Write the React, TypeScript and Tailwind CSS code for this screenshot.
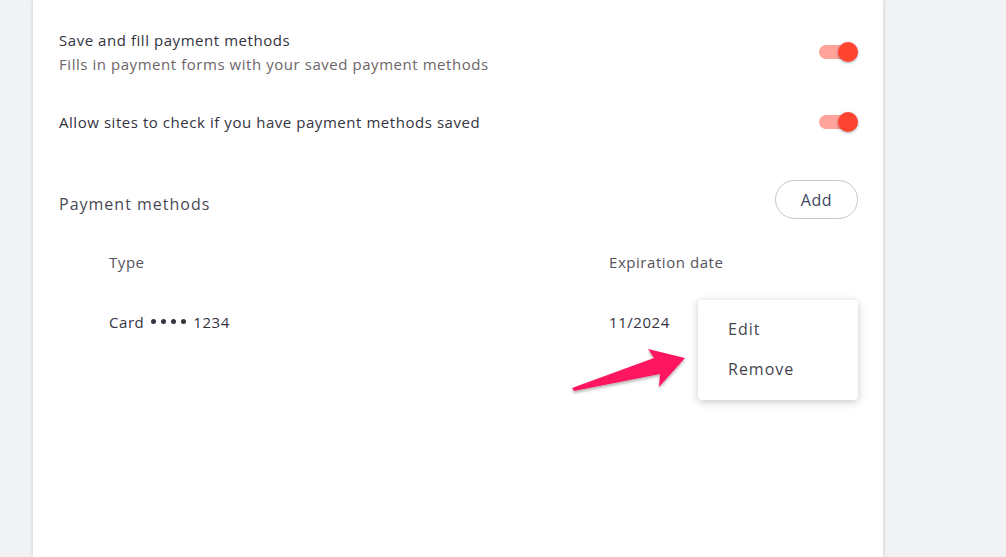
import React from "react";

function Toggle() {
  return (
    <div className="relative w-[40px] h-[20px] shrink-0">
      <div className="absolute left-[1px] top-[3px] w-[36px] h-[14px] rounded-full bg-[#ffa39b]" />
      <div className="absolute right-0 top-0 w-[20px] h-[20px] rounded-full bg-[#ff4331] shadow-[0_1px_3px_rgba(0,0,0,0.35)]" />
    </div>
  );
}

function Dots() {
  return (
    <span className="inline-flex items-center gap-[5px] mx-[7px] align-middle -mt-[2px]">
      <span className="w-[5px] h-[5px] rounded-full bg-[#35343f]" />
      <span className="w-[5px] h-[5px] rounded-full bg-[#35343f]" />
      <span className="w-[5px] h-[5px] rounded-full bg-[#35343f]" />
      <span className="w-[5px] h-[5px] rounded-full bg-[#35343f]" />
    </span>
  );
}

export default function App() {
  const body = { fontFamily: "'Open Sans', Lato, sans-serif" };

  return (
    <div className="relative min-h-screen bg-[#f1f2f4] overflow-hidden tracking-[0.55px]" style={body}>
      <div className="ml-[33px] w-[850px] min-h-[557px] bg-white shadow-[0_0_4px_rgba(0,0,0,0.18)] pt-[28px] pl-[26px] pr-[25px]">
        {/* Save and fill */}
        <div className="flex items-center justify-between">
          <div className="text-[15px] leading-6">
            <div className="text-[#33333d]">Save and fill payment methods</div>
            <div className="text-[#6e6568]">Fills in payment forms with your saved payment methods</div>
          </div>
          <Toggle />
        </div>

        {/* Allow sites */}
        <div className="mt-[34px] flex items-center justify-between h-6">
          <div className="text-[15px] leading-6 text-[#33333d]">
            Allow sites to check if you have payment methods saved
          </div>
          <Toggle />
        </div>

        {/* Payment methods header */}
        <div className="mt-[46px] flex items-start justify-between">
          <div className="mt-[12px] text-[16px] leading-6 font-medium tracking-[1px] text-[#4a4953]">
            Payment methods
          </div>
          <button className="w-[83px] h-[39px] rounded-full border border-[#c6c6d2] text-[16px] tracking-[0.6px] text-[#3c4660]">
            Add
          </button>
        </div>

        {/* Table header */}
        <div className="mt-[31px] flex text-[15px] leading-6 text-[#55535c]">
          <div className="pl-[50px] w-[550px]">Type</div>
          <div>Expiration date</div>
        </div>

        {/* Row */}
        <div className="relative mt-[36px] flex text-[15px] leading-6 text-[#35343f]">
          <div className="pl-[50px] w-[550px] flex items-center">
            <span>Card</span>
            <Dots />
            <span>1234</span>
          </div>
          <div>11/2024</div>

          <div className="absolute right-0 top-[-10px] w-[160px] h-[100px] bg-white rounded-[4px] shadow-[0_2px_8px_rgba(0,0,0,0.22)] pt-[9px] text-[16px] tracking-[1px] text-[#45444e]">
            <div className="h-[40px] leading-[40px] pl-[30px]">Edit</div>
            <div className="h-[40px] leading-[40px] pl-[30px]">Remove</div>
          </div>
        </div>
      </div>

      {/* Annotation arrow */}
      <svg className="absolute left-0 top-0 pointer-events-none" width="1006" height="557">
        <defs>
          <filter id="sh" x="-10%" y="-10%" width="130%" height="140%">
            <feDropShadow dx="0" dy="2" stdDeviation="1.5" floodColor="#000" floodOpacity="0.3" />
          </filter>
        </defs>
        <polygon
          points="572,388 654,358 648,349 685,358 659,387 660,374 574,391"
          fill="#ff1561"
          filter="url(#sh)"
        />
      </svg>
    </div>
  );
}
